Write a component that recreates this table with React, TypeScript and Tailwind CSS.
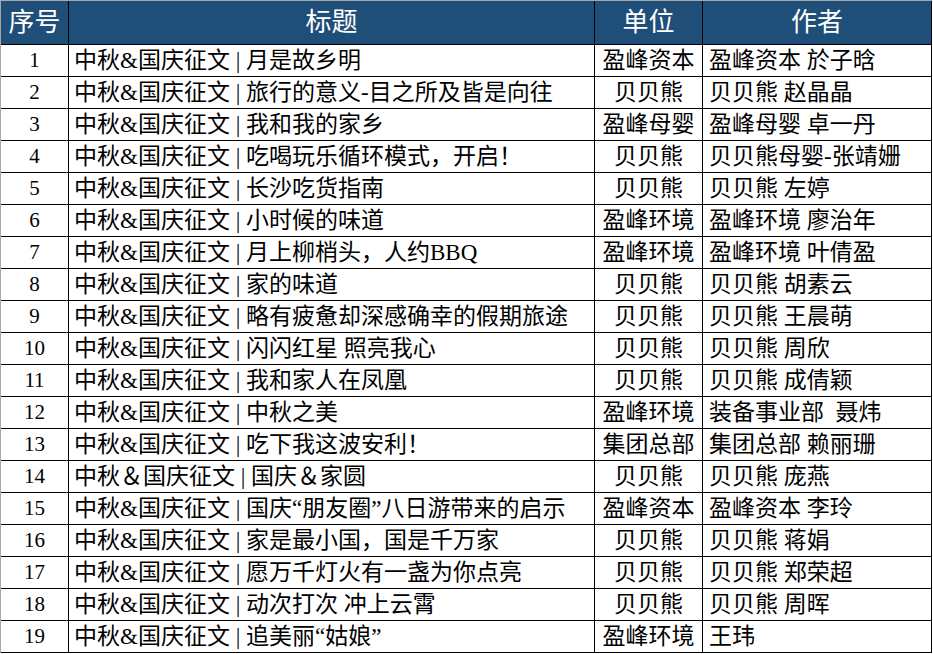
const rows: [string, string, string][] = [
  ['中秋&国庆征文 | 月是故乡明', '盈峰资本', '盈峰资本 於子晗'],
  ['中秋&国庆征文 | 旅行的意义-目之所及皆是向往', '贝贝熊', '贝贝熊 赵晶晶'],
  ['中秋&国庆征文 | 我和我的家乡', '盈峰母婴', '盈峰母婴 卓一丹'],
  ['中秋&国庆征文 | 吃喝玩乐循环模式，开启！', '贝贝熊', '贝贝熊母婴-张靖姗'],
  ['中秋&国庆征文 | 长沙吃货指南', '贝贝熊', '贝贝熊 左婷'],
  ['中秋&国庆征文 | 小时候的味道', '盈峰环境', '盈峰环境 廖治年'],
  ['中秋&国庆征文 | 月上柳梢头，人约BBQ', '盈峰环境', '盈峰环境 叶倩盈'],
  ['中秋&国庆征文 | 家的味道', '贝贝熊', '贝贝熊 胡素云'],
  ['中秋&国庆征文 | 略有疲惫却深感确幸的假期旅途', '贝贝熊', '贝贝熊 王晨萌'],
  ['中秋&国庆征文 | 闪闪红星 照亮我心', '贝贝熊', '贝贝熊 周欣'],
  ['中秋&国庆征文 | 我和家人在凤凰', '贝贝熊', '贝贝熊 成倩颖'],
  ['中秋&国庆征文 | 中秋之美', '盈峰环境', '装备事业部  聂炜'],
  ['中秋&国庆征文 | 吃下我这波安利！', '集团总部', '集团总部 赖丽珊'],
  ['中秋＆国庆征文 | 国庆＆家圆', '贝贝熊', '贝贝熊 庞燕'],
  ['中秋&国庆征文 | 国庆“朋友圈”八日游带来的启示', '盈峰资本', '盈峰资本 李玲'],
  ['中秋&国庆征文 | 家是最小国，国是千万家', '贝贝熊', '贝贝熊 蒋娟'],
  ['中秋&国庆征文 | 愿万千灯火有一盏为你点亮', '贝贝熊', '贝贝熊 郑荣超'],
  ['中秋&国庆征文 | 动次打次 冲上云霄', '贝贝熊', '贝贝熊 周晖'],
  ['中秋&国庆征文 | 追美丽“姑娘”', '盈峰环境', '王玮'],
]

const font = { fontFamily: '"Liberation Serif", "Noto Sans CJK SC", serif' }

export default function App() {
  return (
    <div className="w-[933px] h-[654px] bg-white overflow-hidden" style={font}>
      <div className="w-[932px] border-t border-l border-[#a6a6a6]">
        {/* 表头 */}
        <div className="grid grid-cols-[68px_526px_108px_229px] h-[44px] bg-[#1f4e78] text-white text-[26px] border-b border-black leading-none">
          <div className="flex items-center justify-center border-r border-black">序号</div>
          <div className="flex items-center justify-center border-r border-black">标题</div>
          <div className="flex items-center justify-center border-r border-black">单位</div>
          <div className="flex items-center justify-center border-r border-black">作者</div>
        </div>
        {rows.map((r, i) => (
          <div
            key={i}
            className="grid grid-cols-[68px_526px_108px_229px] h-[32px] text-[23px] text-black border-b border-black leading-none"
          >
            <div className="flex items-center justify-center border-r border-black text-[21px]">{i + 1}</div>
            <div className="flex items-center pl-[5px] border-r border-black whitespace-pre">{r[0]}</div>
            <div className="flex items-center justify-center border-r border-black">{r[1]}</div>
            <div className="flex items-center pl-[6px] border-r border-black whitespace-pre">{r[2]}</div>
          </div>
        ))}
      </div>
    </div>
  )
}
